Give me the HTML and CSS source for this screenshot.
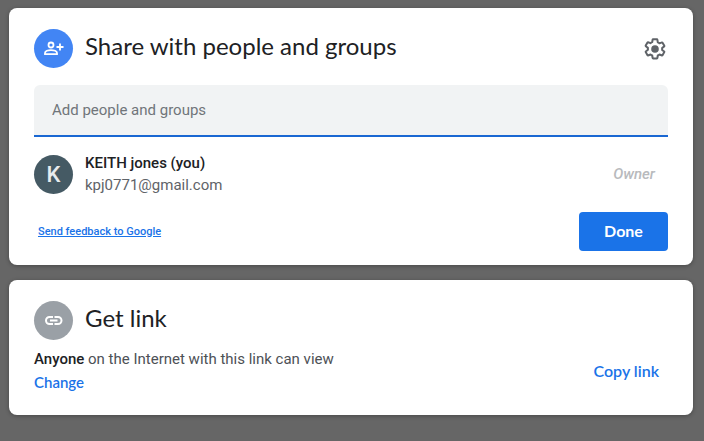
FILE: index.html
```html
<!DOCTYPE html>
<html lang="en">
<head>
<meta charset="utf-8">
<meta name="viewport" content="width=device-width, initial-scale=1">
<title>Share with people and groups</title>
<link rel="stylesheet" href="styles.css">
</head>
<body>
<main class="dialog">
  <section class="card share">
    <header class="card-header">
      <span class="badge badge-blue">
        <svg width="20" height="20" viewBox="0 0 20 20" fill="none" stroke="currentColor" stroke-width="1.8" aria-hidden="true">
          <circle cx="7" cy="6" r="2.5"/>
          <path d="M1 15.2V14c0-1.7 3-2.9 6-2.9s6 1.2 6 2.9v1.2z"/>
          <path d="M16 4.500v7M12.500 8h7"/>
        </svg>
      </span>
      <h1 class="title">Share with people and groups</h1>
      <button class="icon-button" type="button" aria-label="Settings">
        <svg width="24" height="24" viewBox="0 0 24 24" aria-hidden="true">
          <path fill="none" stroke="currentColor" stroke-width="2" stroke-linejoin="round" d="M19.1 12.98c.04-.32.07-.64.07-.98 0-.34-.03-.66-.07-.98l2.11-1.65c.19-.15.24-.42.12-.64l-1.8-3.1c-.09-.16-.26-.25-.44-.25l-2.6.97c-.52-.4-1.08-.73-1.69-.98l-.38-2.55C14.36 2.4 14.15 2.2 13.9 2.2h-3.8c-.25 0-.46.2-.49.44l-.38 2.55c-.61.25-1.17.59-1.69.98l-2.6-.97c-.17 0-.34.09-.43.25l-1.8 3.1c-.13.22-.07.49.12.64l2.11 1.65c-.04.32-.07.65-.07.98 0 .33.03.66.07.98l-2.11 1.65c-.19.15-.24.42-.12.64l1.8 3.1c.09.16.26.25.44.25l2.6-.97c.52.4 1.08.73 1.69.98l.38 2.55c.03.24.24.44.49.44h3.8c.25 0 .46-.2.49-.44l.38-2.55c.61-.25 1.17-.59 1.69-.98l2.6.97c.17 0 .34-.09.43-.25l1.8-3.1c.12-.22.07-.49-.12-.64z"/>
          <circle cx="12" cy="12" r="3.8" fill="currentColor"/>
        </svg>
      </button>
    </header>
    <input class="people-input" type="text" placeholder="Add people and groups" aria-label="Add people and groups">
    <div class="person">
      <span class="badge badge-slate" aria-hidden="true">K</span>
      <div class="person-text">
        <div class="person-name">KEITH jones (you)</div>
        <div class="person-email">kpj0771@gmail.com</div>
      </div>
      <span class="role">Owner</span>
    </div>
    <footer class="actions">
      <a class="feedback" href="#">Send feedback to Google</a>
      <button class="done" type="button">Done</button>
    </footer>
  </section>
  <section class="card link">
    <header class="card-header">
      <span class="badge badge-gray">
        <svg width="20" height="20" viewBox="0 0 20 20" fill="none" stroke="currentColor" stroke-width="2" aria-hidden="true">
          <path d="M9 6H5.500a3.500 3.500 0 0 0 0 7H9M10.500 6H14a3.500 3.500 0 0 1 0 7h-3.500M6 9.500h7.500"/>
        </svg>
      </span>
      <h2 class="title">Get link</h2>
    </header>
    <div class="link-row">
      <div class="link-text">
        <p class="access"><strong>Anyone</strong> on the Internet with this link can view</p>
        <button class="text-button change" type="button">Change</button>
      </div>
      <button class="text-button copy" type="button">Copy link</button>
    </div>
  </section>
</main>
</body>
</html>
```
FILE: styles.css
```css
* {
  box-sizing: border-box;
}

body {
  margin: 0;
  background: #666;
  font-family: Roboto, "Liberation Sans", sans-serif;
  font-size: 15px;
  line-height: 22px;
  color: #202124;
}

button {
  border: 0;
  background: none;
  padding: 0;
  cursor: pointer;
}

.dialog {
  display: flex;
  flex-direction: column;
  gap: 15px;
  padding: 8px 11px 24px 9px;
}

.card {
  padding: 21px 25px;
  border-radius: 8px;
  background: #fff;
  box-shadow: 0 1px 4px rgba(0, 0, 0, 0.3);
}

.share {
  padding-bottom: 14px;
}

.card-header {
  display: flex;
  align-items: center;
  gap: 12px;
}

.badge {
  display: flex;
  flex: none;
  align-items: center;
  justify-content: center;
  width: 39px;
  height: 39px;
  border-radius: 50%;
  color: #fff;
}

.badge-blue {
  background: #4285f4;
}

.badge-slate {
  padding-top: 2px;
  background: #455a64;
  color: #e8ecee;
  font-size: 22px;
  font-weight: 500;
}

.badge-gray {
  background: #9aa0a6;
}

.title {
  flex: 1;
  margin: 0;
  padding-bottom: 6px;
  font-family: "Google Sans", Lato, sans-serif;
  font-size: 24px;
  font-weight: 400;
  line-height: 32px;
}

.icon-button {
  display: flex;
  width: 24px;
  height: 24px;
  margin-right: 1px;
  color: #5f6368;
}

.people-input {
  display: block;
  width: 100%;
  height: 52px;
  margin-top: 17px;
  padding: 0 18px;
  border: 0;
  border-bottom: 2px solid #1967d2;
  border-radius: 6px 6px 0 0;
  outline: 0;
  background: #f1f3f4;
  font: inherit;
}

.people-input::placeholder {
  color: #70757a;
  opacity: 1;
}

.person {
  display: flex;
  align-items: center;
  gap: 12px;
  margin-top: 15px;
}

.person-text {
  flex: 1;
}

.person-name {
  font-weight: 500;
}

.person-email {
  color: #5f6368;
}

.role {
  padding-right: 13px;
  color: #b8babd;
  font-style: italic;
  font-weight: 500;
}

.actions {
  display: flex;
  align-items: center;
  justify-content: space-between;
  margin-top: 16px;
}

.feedback {
  margin-left: 4px;
  color: #1a73e8;
  font-size: 11px;
  font-weight: 500;
}

.done {
  width: 89px;
  height: 39px;
  padding-bottom: 3px;
  border-radius: 4px;
  background: #1a73e8;
  color: #fff;
  font-family: "Google Sans", Lato, sans-serif;
  font-size: 16px;
  font-weight: 700;
}

.link-row {
  display: flex;
  align-items: center;
  justify-content: space-between;
  margin-top: 8px;
}

.access {
  margin: 0;
  color: #4d5156;
}

.access strong {
  color: #202124;
  font-weight: 500;
}

.text-button {
  color: #1a73e8;
  font-family: "Google Sans", Lato, sans-serif;
  font-weight: 600;
  line-height: 24px;
}

.change {
  font-size: 15px;
}

.copy {
  padding-right: 9px;
  font-size: 16px;
}
```
